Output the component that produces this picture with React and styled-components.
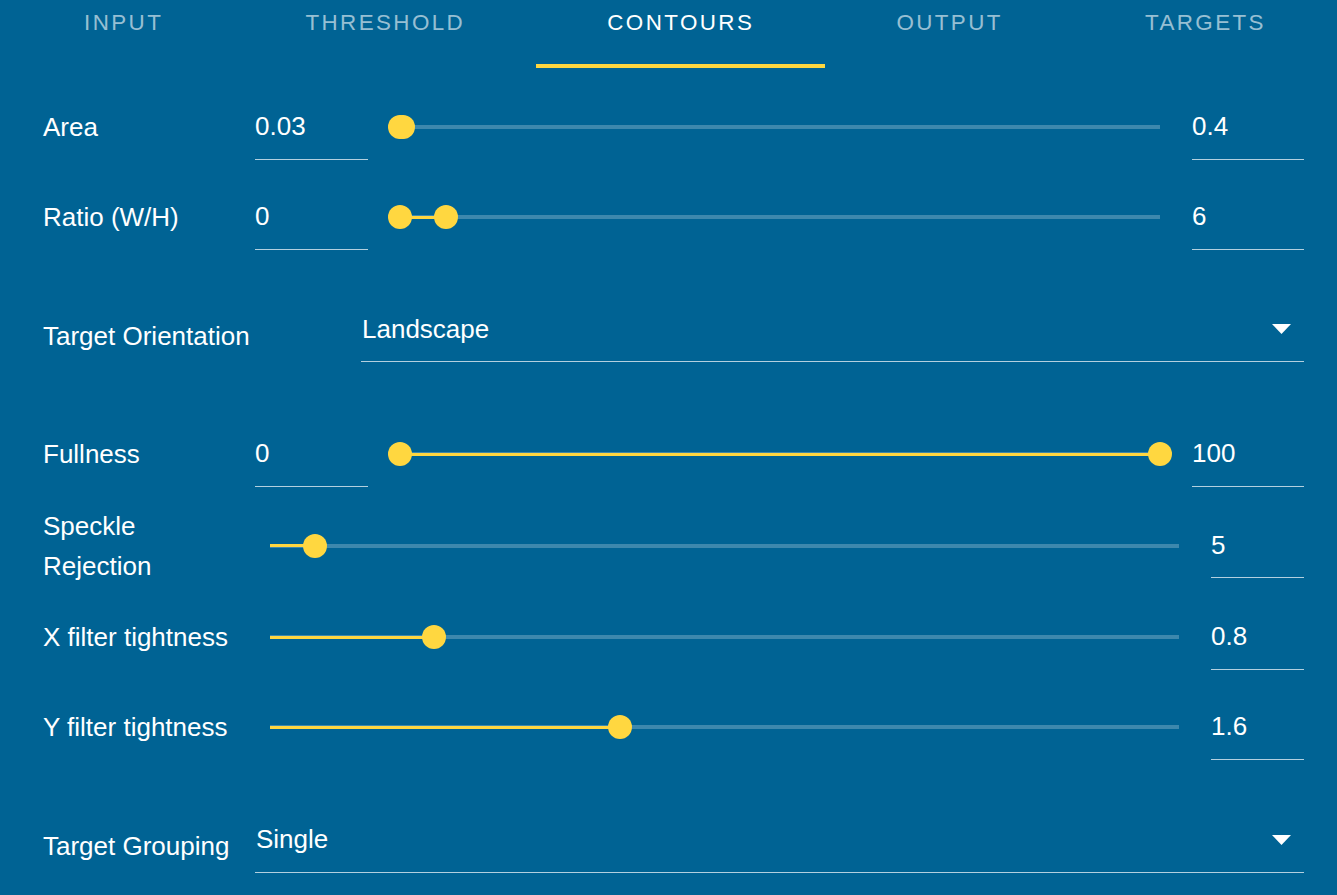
import React from 'react';
import styled, { createGlobalStyle } from 'styled-components';

const GlobalStyle = createGlobalStyle`
  body {
    margin: 0;
    background: #006394;
    font-family: "Liberation Sans", Arial, sans-serif;
    color: #fff;
    overflow: hidden;
  }
`;

const Page = styled.div`
  width: 1337px;
  height: 895px;
  background: #006394;
`;

const TabBar = styled.div`
  display: flex;
  height: 68px;
  padding-left: 13px;
  margin-bottom: 14px;
`;

const Tab = styled.div`
  flex: 1 0 auto;
  position: relative;
  display: flex;
  justify-content: center;
  padding-top: 10px;
  font-family: "Liberation Sans", Arial, sans-serif;
  font-size: 22.4px;
  letter-spacing: 2.4px;
  text-transform: uppercase;
  color: ${p => (p.$active ? '#ffffff' : 'rgba(255,255,255,0.6)')};

  &::after {
    content: '';
    display: ${p => (p.$active ? 'block' : 'none')};
    position: absolute;
    left: 0;
    right: 0;
    bottom: 0;
    height: 4px;
    background: #ffd740;
  }
`;

const Row = styled.div`
  display: grid;
  grid-template-columns: ${p => p.$cols};
  align-items: center;
  height: ${p => p.$h}px;
  padding: 0 33px 0 43px;
`;

const Label = styled.div`
  font-size: 26px;
  line-height: 40px;
  padding-right: 8px;
`;

const Field = styled.div`
  display: flex;
  align-items: center;
  height: 64px;
  border-bottom: 1px solid rgba(255, 255, 255, 0.7);
  font-size: 26px;
`;

const SliderCell = styled.div`
  padding: 0 ${p => p.$pr}px 0 ${p => p.$pl}px;
`;

const Track = styled.div`
  position: relative;
  height: 4px;
  background: rgba(255, 255, 255, 0.24);
`;

const Fill = styled.div`
  position: absolute;
  top: 0.5px;
  height: 3px;
  background: #ffd740;
`;

const Thumb = styled.div`
  position: absolute;
  top: 50%;
  width: 24px;
  height: 24px;
  border-radius: 50%;
  background: #ffd740;
  transform: translate(-50%, -50%);
`;

const Select = styled.div`
  display: flex;
  align-items: center;
  justify-content: space-between;
  height: 64px;
  margin-bottom: 12px;
  padding-left: 1px;
  border-bottom: 1px solid rgba(255, 255, 255, 0.7);
  font-size: 26px;
`;

const Arrow = styled.svg`
  width: 19px;
  height: 10px;
  margin-right: 13px;
  fill: #fff;
`;

const tabs = ['Input', 'Threshold', 'Contours', 'Output', 'Targets'];

function Slider({ from = 0, to, pl, pr, range }) {
  return (
    <SliderCell $pl={pl} $pr={pr}>
      <Track>
        <Fill style={{ left: `${from}%`, width: `${to - from}%` }} />
        {range && <Thumb style={{ left: `${from}%` }} />}
        <Thumb style={{ left: `${to}%` }} />
      </Track>
    </SliderCell>
  );
}

function RangeRow({ label, min, max, from, to, h = 90 }) {
  return (
    <Row $cols="212px 113px 1fr 112px" $h={h}>
      <Label>{label}</Label>
      <Field>{min}</Field>
      <Slider from={from} to={to} pl={32} pr={32} range />
      <Field>{max}</Field>
    </Row>
  );
}

function SingleRow({ label, value, pos, h = 90 }) {
  return (
    <Row $cols="212px 1fr 93px" $h={h}>
      <Label>{label}</Label>
      <Slider to={pos} pl={15} pr={32} />
      <Field>{value}</Field>
    </Row>
  );
}

function SelectRow({ label, value, cols, h }) {
  return (
    <Row $cols={cols} $h={h}>
      <Label>{label}</Label>
      <Select>
        <span>{value}</span>
        <Arrow viewBox="0 0 19 10">
          <path d="M0 0h19l-9.5 10z" />
        </Arrow>
      </Select>
    </Row>
  );
}

export default function App() {
  return (
    <Page>
      <GlobalStyle />
      <TabBar>
        {tabs.map(t => (
          <Tab key={t} $active={t === 'Contours'}>{t}</Tab>
        ))}
      </TabBar>
      <RangeRow label="Area" min="0.03" max="0.4" from={0.03} to={0.4} />
      <RangeRow label="Ratio (W/H)" min="0" max="6" from={0} to={6} />
      <SelectRow label="Target Orientation" value="Landscape" cols="318px 1fr" h={147} />
      <RangeRow label="Fullness" min="0" max="100" from={0} to={100} />
      <SingleRow label="Speckle Rejection" value="5" pos={5} h={93} />
      <SingleRow label="X filter tightness" value="0.8" pos={18} />
      <SingleRow label="Y filter tightness" value="1.6" pos={38.5} />
      <SelectRow label="Target Grouping" value="Single" cols="212px 1fr" h={148} />
    </Page>
  );
}
